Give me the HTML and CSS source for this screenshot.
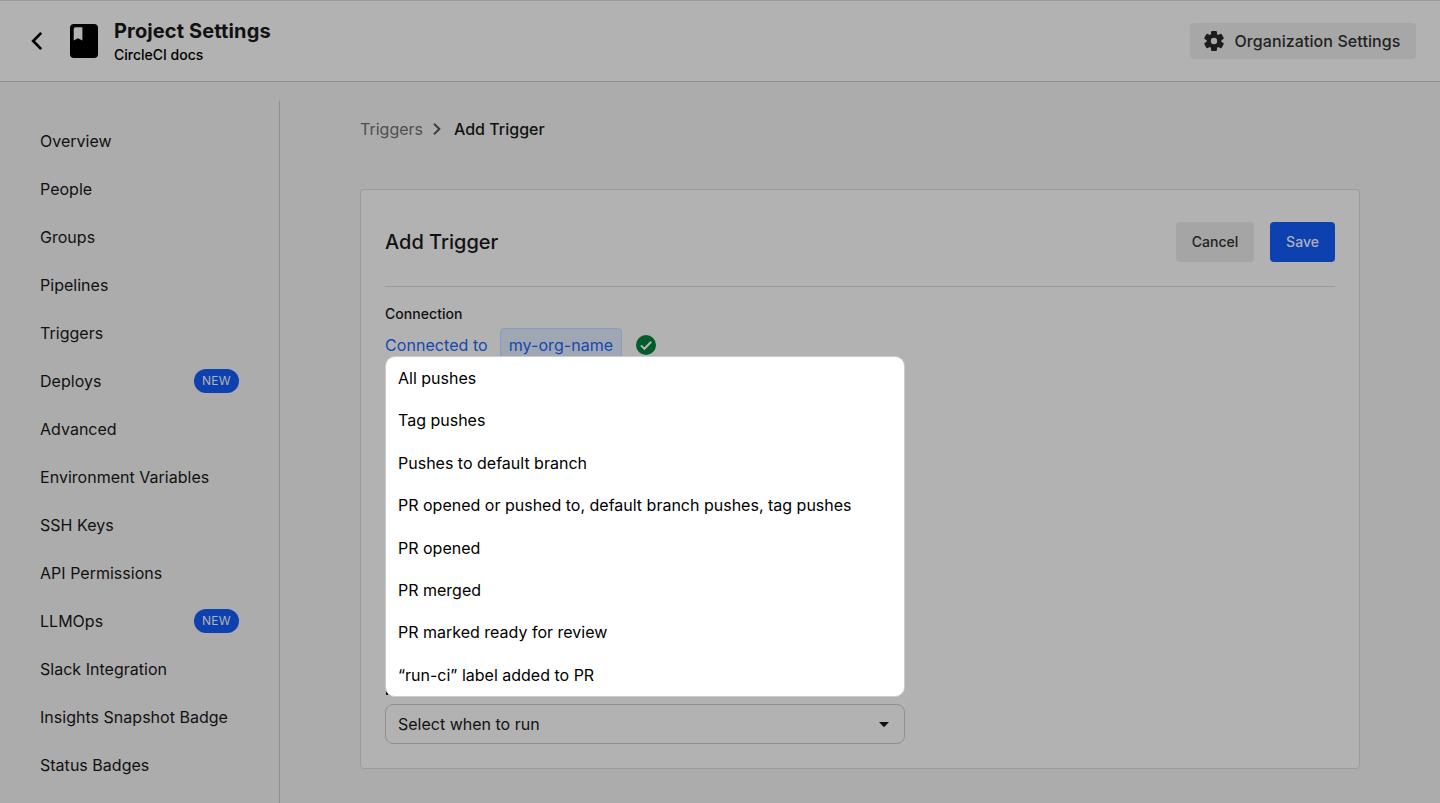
FILE: index.html
```html
<!DOCTYPE html>
<html lang="en">
<head>
<meta charset="utf-8">
<title>Project Settings</title>
<link rel="stylesheet" href="styles.css">
</head>
<body>
<header class="topbar">
  <svg class="back" viewBox="0 0 12 20" fill="none" stroke="#000" stroke-width="2.7"><path d="M10.2 1.9 2.2 10l8 8.1"/></svg>
  <svg class="book" viewBox="0 0 28 34"><path fill="#000" fill-rule="evenodd" d="M4 0h20a4 4 0 0 1 4 4v26a4 4 0 0 1-4 4H4a4 4 0 0 1-4-4V4a4 4 0 0 1 4-4ZM5.5 3.3Q3.7 3.3 3.7 5.1V16.6L8 14.2l4.4 2.4V3.3Z"/></svg>
  <div class="titles">
    <h1 class="title">Project Settings</h1>
    <p class="subtitle">CircleCI docs</p>
  </div>
  <button class="org-button">
    <svg class="gear" viewBox="0 0 20 20"><g fill="#1c1c1c"><circle cx="10" cy="10" r="7.4"/><g id="teeth"><rect x="7" y="0" width="6" height="20" rx="1.3"/><rect x="7" y="0" width="6" height="20" rx="1.3" transform="rotate(60 10 10)"/><rect x="7" y="0" width="6" height="20" rx="1.3" transform="rotate(120 10 10)"/></g></g><circle cx="10" cy="10" r="3.2" fill="#a7a7a7"/></svg>
    <span>Organization Settings</span>
  </button>
</header>
<div class="layout">
  <nav class="sidebar">
    <a class="nav-item">Overview</a>
    <a class="nav-item">People</a>
    <a class="nav-item">Groups</a>
    <a class="nav-item">Pipelines</a>
    <a class="nav-item">Triggers</a>
    <a class="nav-item">Deploys<span class="badge">NEW</span></a>
    <a class="nav-item">Advanced</a>
    <a class="nav-item">Environment Variables</a>
    <a class="nav-item">SSH Keys</a>
    <a class="nav-item">API Permissions</a>
    <a class="nav-item">LLMOps<span class="badge">NEW</span></a>
    <a class="nav-item">Slack Integration</a>
    <a class="nav-item">Insights Snapshot Badge</a>
    <a class="nav-item">Status Badges</a>
  </nav>
  <main class="main">
    <div class="crumbs">
      <span class="crumb">Triggers</span>
      <svg class="chevron" viewBox="0 0 8 12" fill="none" stroke="#3b3b3b" stroke-width="1.9"><path d="m1 .8 5.4 5.2L1 11.2"/></svg>
      <span class="crumb-current">Add Trigger</span>
    </div>
    <section class="card">
      <div class="card-head">
        <h2 class="card-title">Add Trigger</h2>
        <button class="btn btn-cancel">Cancel</button>
        <button class="btn btn-save">Save</button>
      </div>
      <h3 class="label">Connection</h3>
      <div class="connection">
        <span>Connected to</span>
        <span class="org-name">my-org-name</span>
        <svg class="check" viewBox="0 0 20 20"><circle cx="10" cy="10" r="10" fill="#005c2c"/><path d="m4.9 10.4 3.5 3.4 6.8-7.1" fill="none" stroke="#b2b2b2" stroke-width="2"/></svg>
      </div>
      <div class="run-field">
        <div class="select">
          <span>Select when to run</span>
          <svg class="caret" viewBox="0 0 10 5"><path d="M0 0h10L5.8 4.5q-.8.7-1.6 0Z" fill="#111"/></svg>
        </div>
        <ul class="menu">
          <li class="option">All pushes</li>
          <li class="option">Tag pushes</li>
          <li class="option">Pushes to default branch</li>
          <li class="option">PR opened or pushed to, default branch pushes, tag pushes</li>
          <li class="option">PR opened</li>
          <li class="option">PR merged</li>
          <li class="option">PR marked ready for review</li>
          <li class="option">“run-ci” label added to PR</li>
        </ul>
      </div>
    </section>
  </main>
</div>
</body>
</html>
```
FILE: styles.css
```css
* { box-sizing: border-box; margin: 0; padding: 0; }
body {
  height: 803px;
  overflow: hidden;
  display: flex;
  flex-direction: column;
  background: #acacac;
  color: #111;
  font: 400 16px/24px Inter, "Liberation Sans", sans-serif;
}
svg { display: block; flex: none; }
button { border: 0; font: inherit; letter-spacing: inherit; color: inherit; }
.topbar {
  height: 82px;
  flex: none;
  display: flex;
  align-items: center;
  padding: 0 24px 0 31px;
  background: #b2b2b2;
  border-top: 1px solid #9b9b9b;
  border-bottom: 1px solid #8f8f8f;
}
.back { width: 12px; height: 20px; margin-right: 27px; }
.book { width: 28px; height: 34px; margin-right: 16px; }
.titles { flex: 1; padding-top: 4px; }
.title { font-size: 20px; font-weight: 700; line-height: 24px; letter-spacing: 0.13px; }
.subtitle { font-size: 14px; font-weight: 500; line-height: 24px; color: #000; }
.org-button {
  height: 36px;
  width: 226px;
  display: flex;
  align-items: center;
  gap: 10.5px;
  padding-left: 14px;
  border-radius: 4px;
  background: #a7a7a7;
  color: #222;
  font-weight: 500;
  letter-spacing: 0.08px;
  white-space: nowrap;
}
.gear { width: 20px; height: 20px; }
.layout { flex: 1; min-height: 0; display: flex; }
.sidebar {
  width: 280px;
  flex: none;
  margin-top: 19px;
  padding: 16px 40px 0;
  border-right: 1px solid #8f8f8f;
}
.nav-item { height: 48px; display: flex; align-items: center; justify-content: space-between; white-space: nowrap; letter-spacing: 0.02px; }
.badge {
  width: 45px;
  height: 24px;
  border-radius: 12px;
  background: #0e41b0;
  color: #b2b2b2;
  font-size: 12px;
  text-align: center;
  letter-spacing: 0.3px;
}
.main { flex: 1; padding: 35px 80px 0; }
.crumbs { display: flex; align-items: center; }
.crumb { width: 62px; color: #4f4f4f; }
.chevron { width: 8px; height: 12px; margin: 0 13px 0 11px; }
.crumb-current { font-weight: 500; }
.card {
  height: 580px;
  margin-top: 48px;
  padding: 0 24px 24px;
  display: flex;
  flex-direction: column;
  background: #b2b2b2;
  border: 1px solid #9b9b9b;
  border-radius: 4px;
}
.card-head {
  height: 97px;
  padding-top: 32px;
  display: flex;
  align-items: flex-start;
  gap: 16px;
  border-bottom: 1px solid #999;
}
.card-title { flex: 1; font-size: 20px; font-weight: 500; line-height: 40px; }
.btn { height: 40px; border-radius: 4px; font-size: 14px; font-weight: 500; }
.btn-cancel { width: 78px; background: #a5a5a5; color: #222; }
.btn-save { width: 65px; background: #0e41b0; color: #b2b2b2; }
.label { margin-top: 17px; font-size: 14px; font-weight: 500; line-height: 20px; letter-spacing: 0.05px; }
.connection { display: flex; align-items: center; margin-top: 4px; color: #1548af; letter-spacing: 0.06px; }
.connection > span:first-child { width: 103px; white-space: nowrap; }
.org-name {
  height: 34px;
  width: 122px;
  margin: 0 14px 0 12px;
  line-height: 32px;
  text-align: center;
  background: #a0a7b4;
  border: 1px solid #8c9cc0;
  border-radius: 4px;
}
.check { width: 20px; height: 20px; }
.run-field { position: relative; width: 520px; margin-top: auto; }
/* edge of the field label that shows past the menu's rounded corner */
.run-field::before {
  content: "";
  position: absolute;
  left: 1px;
  top: -14px;
  width: 2px;
  height: 5px;
  background: #111;
}
.select {
  height: 40px;
  padding: 0 15px 0 12px;
  display: flex;
  align-items: center;
  justify-content: space-between;
  border: 1px solid #8f8f8f;
  border-radius: 8px;
}
.caret { width: 10px; height: 5px; }
.menu {
  position: absolute;
  left: 0;
  bottom: 47px;
  width: 520px;
  height: 341px;
  padding: 0 12px;
  list-style: none;
  background: #fff;
  border: 1px solid #ccc;
  border-radius: 10px;
  color: #000;
}
.option { height: 42.4px; line-height: 42.4px; white-space: nowrap; }
```
